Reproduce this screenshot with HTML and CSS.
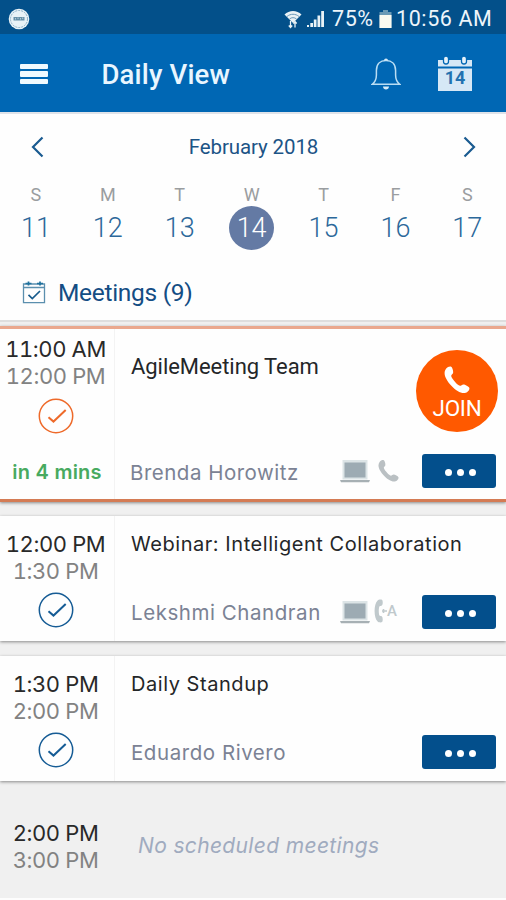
FILE: index.html
```html
<!DOCTYPE html>
<html lang="en">
<head>
<meta charset="utf-8">
<title>Daily View</title>
<link rel="stylesheet" href="styles.css">
</head>
<body>
<svg class="defs" width="0" height="0">
  <symbol id="phone" viewBox="0 0 26 28">
    <path d="M2.200 2.600C3.500.9 5.700 0 7.200.7c1.200.8 2.200 4.200 1.900 6.100-.3 1.400-1.700 1.700-1.900 2.900-.2 2 5 8.300 8 9.900 1.600.7 2.600-1.200 4.200-1.200 1.700 0 5.300 2 5.900 3.300.7 1.900-1.800 4.900-4.400 5.200C13.400 28.200.2 14.200.6 6.800c.1-1.600.7-3.100 1.600-4.200z" fill="currentColor"/>
  </symbol>
  <symbol id="laptop" viewBox="0 0 30 24">
    <path d="M2.500 1h25v19.500h-25z" fill="#dce4e6"/>
    <path d="M4.500 3.500h21v15h-21z" fill="#9dabb3"/>
    <path d="M0 21h30l-1 2.200H1z" fill="#a7b0b4"/>
  </symbol>
  <symbol id="check" viewBox="0 0 36 36">
    <circle cx="18" cy="18" r="16.700" fill="none" stroke="currentColor" stroke-width="1.500"/>
    <path d="M10.500 19.200l5 4.400 12.200-11.500" fill="none" stroke="currentColor" stroke-width="2"/>
  </symbol>
</svg>

<div class="status">
  <svg class="badge" width="22" height="22" viewBox="0 0 22 22">
    <circle cx="11" cy="11" r="10.300" fill="#e8f2f7"/>
    <circle cx="11" cy="11" r="8.500" fill="none" stroke="#7fa6be" stroke-width=".9" stroke-dasharray="2 1"/>
    <path d="M5.500 9h11v3.500h-11z" fill="#6690a8"/>
    <path d="M7.500 10v1.500M10 9.500v1.500M12.500 10v1.500M14.700 9.500v1.500" stroke="#c8dce6" stroke-width=".8"/>
  </svg>
  <svg class="wifi" width="18" height="19" viewBox="0 0 18 19">
    <path d="M.5 4.500C5-.2 13-.2 17.500 4.500L9 13z" fill="#e9f2f6"/>
    <path d="M3 6.500c3.500-3 8.500-3 12 0M5.500 9c2-1.800 5-1.800 7 0" fill="none" stroke="#5e8fb2" stroke-width=".9"/>
    <path d="M6.500 11v6M4.800 15.500l1.700 2 1.700-2M11 17.500v-6M9.300 13.500l1.700-2 1.700 2" fill="none" stroke="#e9f2f6" stroke-width="1.300"/>
  </svg>
  <svg class="signal" width="18" height="18" viewBox="0 0 18 18">
    <path d="M0 15h2v2H0zM3.300 13h2.700v4H3.300zM6.800 9.500h2.700V17H6.800zM10.500 5.500h2.700V17h-2.700zM14.200 1H17v16h-2.800z" fill="#e9f2f6"/>
  </svg>
  <span class="pct">75%</span>
  <svg class="battery" width="13" height="18" viewBox="0 0 13 18">
    <path d="M4 0h5v2h3.500v16H.5V2H4z" fill="#6b9ab5"/>
    <path d="M.5 5h12v13H.5z" fill="#fbfaf0"/>
  </svg>
  <span class="clock">10:56 AM</span>
</div>

<header class="bar">
  <div class="menu"><i></i><i></i><i></i></div>
  <h1>Daily View</h1>
  <svg class="bell" width="30" height="34" viewBox="0 0 30 34">
    <path d="M1.200 27.300c3.300-2.500 4.200-5 4.200-9.300v-4.500C5.400 7 9.300 3.500 15 3.500S24.600 7 24.600 13.500V18c0 4.300.9 6.800 4.200 9.300z" fill="none" stroke="#b9ddf3" stroke-width="1.500"/>
    <path d="M13 3.500a2 2 0 0 1 4 0zM12 29.500h6c0 4-6 4-6 0z" fill="#d5ebf8"/>
  </svg>
  <div class="cal">
    <svg width="36" height="36" viewBox="0 0 36 36">
      <path d="M1 4h34v6.500H1zM1 12.500h34V35H1z" fill="#d6e8f6"/>
      <rect x="6.500" y="0" width="5" height="8" rx="2.500" fill="#e5f2fb" stroke="#0067b4" stroke-width="1.300"/>
      <rect x="24.500" y="0" width="5" height="8" rx="2.500" fill="#e5f2fb" stroke="#0067b4" stroke-width="1.300"/>
    </svg>
    <span>14</span>
  </div>
</header>

<section class="picker">
  <div class="month">
    <svg width="13" height="22" viewBox="0 0 13 22"><path d="M11.500 1.500L2 11l9.500 9.500" fill="none" stroke="#1a5b91" stroke-width="2.200"/></svg>
    <span>February 2018</span>
    <svg width="13" height="22" viewBox="0 0 13 22"><path d="M1.500 1.500L11 11l-9.500 9.500" fill="none" stroke="#1a5b91" stroke-width="2.200"/></svg>
  </div>
  <div class="week">
    <div class="day"><span>S</span><b>11</b></div>
    <div class="day"><span>M</span><b>12</b></div>
    <div class="day"><span>T</span><b>13</b></div>
    <div class="day on"><span>W</span><b>14</b></div>
    <div class="day"><span>T</span><b>15</b></div>
    <div class="day"><span>F</span><b>16</b></div>
    <div class="day"><span>S</span><b>17</b></div>
  </div>
  <div class="tab">
    <svg width="24" height="23" viewBox="0 0 24 23">
      <path d="M1.500 3h21v18.700h-21zM1.500 6.500h21" fill="none" stroke="#5b8fae" stroke-width="1.300"/>
      <path d="M3.500 2.500h6M15 2.500h6M6.500.5v4M18 .5v4" stroke="#20729e" stroke-width="1.700"/>
      <path d="M6.500 13.800l3.800 3.700 7.700-7.500" fill="none" stroke="#175b8c" stroke-width="1.700"/>
    </svg>
    <span>Meetings (9)</span>
  </div>
</section>

<main>
  <article class="card now">
    <div class="time">
      <span class="start">11:00 AM</span><span class="end">12:00 PM</span>
      <svg class="check"><use href="#check"/></svg>
      <span class="soon">in 4 mins</span>
    </div>
    <div class="body">
      <h2 class="t1">AgileMeeting Team</h2>
      <div class="foot">
        <span class="who w1">Brenda Horowitz</span>
        <svg class="laptop"><use href="#laptop"/></svg>
        <svg class="phone"><use href="#phone"/></svg>
        <div class="more"><i></i><i></i><i></i></div>
      </div>
      <div class="join"><svg width="26" height="28"><use href="#phone"/></svg><span>JOIN</span></div>
    </div>
  </article>

  <article class="card second">
    <div class="time">
      <span class="start">12:00 PM</span><span class="end">1:30 PM</span>
      <svg class="check"><use href="#check"/></svg>
    </div>
    <div class="body">
      <h2 class="t2">Webinar: Intelligent Collaboration</h2>
      <div class="foot">
        <span class="who">Lekshmi Chandran</span>
        <svg class="laptop"><use href="#laptop"/></svg>
        <div class="auto">
          <svg width="10" height="26" viewBox="0 0 11 26"><path d="M4 1.500C5 .3 8 .2 9 1c1 1.200.7 5-.3 6-.9.700-2.200.2-2.700 1-1 2-1 8 0 10 .5.800 1.800.3 2.700 1 1 1 1.300 4.800.3 6-1 .8-4 .7-5-.5C-.5 20.500-.5 5.500 4 1.500z" fill="#c0c9cc"/></svg>
          <svg class="dash" width="5" height="10" viewBox="0 0 5 10"><path d="M0 5h5M1.500 3v4" stroke="#c0c9cc" stroke-width="1.600"/></svg>
          <span>A</span>
        </div>
        <div class="more"><i></i><i></i><i></i></div>
      </div>
    </div>
  </article>

  <article class="card third">
    <div class="time">
      <span class="start">1:30 PM</span><span class="end">2:00 PM</span>
      <svg class="check"><use href="#check"/></svg>
    </div>
    <div class="body">
      <h2 class="t3">Daily Standup</h2>
      <div class="foot">
        <span class="who">Eduardo Rivero</span>
        <div class="more"><i></i><i></i><i></i></div>
      </div>
    </div>
  </article>

  <div class="free">
    <div class="time"><span class="start">2:00 PM</span><span class="end">3:00 PM</span></div>
    <p>No scheduled meetings</p>
  </div>
</main>
</body>
</html>
```
FILE: styles.css
```css
* { box-sizing: border-box; }
body { margin: 0; width: 506px; height: 900px; overflow: hidden; background: #fdfdfd; font-family: Roboto, "Liberation Sans", sans-serif; white-space: nowrap; }
h1, h2, p { margin: 0; font-weight: 400; }
svg { flex: none; display: block; }
.defs { position: absolute; }

.status { height: 34px; background: #03508a; display: flex; align-items: center; padding: 4px 0 0 8px; color: #edf5fa; font-size: 21.500px; line-height: 26px; }
.wifi { margin-left: 254px; }
.signal { margin-left: 5px; }
.pct { margin-left: 7px; width: 47px; letter-spacing: .6px; }
.battery { margin-right: 4px; }
.clock { letter-spacing: .6px; }

.bar { height: 78px; background: #0067b4; display: flex; align-items: center; padding: 2px 33px 0 20px; }
.menu { width: 28px; display: grid; gap: 2px; }
.menu i { height: 5.500px; border-radius: 1px; background: #f0faff; }
.bar h1 { margin-left: 53.500px; padding-top: 1px; flex: 1; color: #e9f6ff; font-size: 27.500px; letter-spacing: .15px; font-weight: 500; line-height: 34px; }
.bell { margin-right: 36px; }
.cal { position: relative; }
.cal span { position: absolute; inset: 12px 0 0; text-align: center; font-weight: 700; font-size: 18px; line-height: 19px; color: #2272b0; }

.picker { height: 208px; border-top: 2px solid #dfe3e9; background: #fefefe; }
.month { display: flex; align-items: center; justify-content: space-between; height: 65px; padding: 0 30px 0 31px; color: #1c5486; font-size: 20.500px; letter-spacing: -.1px; }
.week { display: grid; grid-template-columns: repeat(7, 71.900px); height: 73px; padding-top: 5px; }
.day { display: grid; justify-items: center; grid-template-rows: 22px 44px; align-items: center; }
.day span { color: #9a9da0; font-size: 18px; line-height: 22px; }
.day b { width: 45px; height: 44px; line-height: 44px; border-radius: 50%; text-align: center; color: #2c689a; font-size: 27px; font-weight: 300; }
.day.on b { color: #fff; background: #647aa4; }
.tab { display: flex; align-items: center; height: 82px; padding: 0 0 0 22px; color: #144d84; font-size: 24.500px; letter-spacing: -.3px; }
.tab svg { margin-top: -2px; }
.tab span { margin: -1px 0 0 12px; }

main { height: 578px; background: #f0f0f0; border-top: 2px solid #dedede; }
.card, .free { display: grid; grid-template-columns: 114px 1fr; }
.card { background: #fefefe; box-shadow: 0 1px 3px #888; }
.now { margin-top: 3.500px; height: 176px; border-top: 3px solid #eaa88e; border-bottom: 3px solid #d47b54; }
.second { margin-top: 14.500px; height: 125px; }
.third { margin-top: 15px; height: 125px; }
.time { display: flex; flex-direction: column; align-items: center; padding-right: 3px; font-family: Inter, sans-serif; font-size: 22px; line-height: 27px; letter-spacing: -.4px; font-variant-numeric: tabular-nums; }
.now .time { padding-top: 7px; }
.second .time, .third .time { padding-top: 15px; }
.start { color: #292929; }
.end { color: #828282; }
.check { width: 36px; height: 36px; margin: 6.500px 0 0 1px; color: #165c95; }
.now .check { margin-top: 8px; color: #ee6a2a; }
.soon { margin: 25px 0 0 3px; font-size: 20px; line-height: 26px; font-weight: 600; letter-spacing: .2px; color: #48aa60; }
.body { position: relative; display: flex; flex-direction: column; justify-content: space-between; border-left: 1px solid #f3f3f3; padding: 0 10px 12px 16px; }
h2 { font-size: 22px; line-height: 28px; color: #242628; }
.t1 { margin-top: 24px; letter-spacing: -.05px; }
.t2, .t3 { margin-top: 14px; font-family: Inter, sans-serif; font-size: 20px; letter-spacing: .55px; }
.foot { display: flex; align-items: center; height: 34px; }
.now .foot { margin-bottom: -1px; }
.who { width: 209px; padding-top: 1px; font-family: Inter, sans-serif; font-size: 20.500px; line-height: 28px; color: #7b8294; letter-spacing: .55px; }
.w1 { padding-top: 4px; margin-left: -1px; width: 210px; letter-spacing: .5px; }
.laptop { width: 30px; height: 24px; }
.phone { width: 21px; height: 24px; margin-left: 8px; color: #bac0c3; }
.auto { margin: -2px 0 0 4px; display: flex; align-items: center; color: #c0c9cc; font-size: 15px; font-weight: 500; }
.dash { margin-left: -2px; }
.more { margin-left: auto; width: 74px; height: 34px; border-radius: 3px; background: #034f8c; display: flex; justify-content: center; align-items: center; gap: 5px; padding: 3px 0 0 3px; }
.more i { width: 7px; height: 7px; border-radius: 50%; background: #fff; }
.join { position: absolute; right: 8px; top: 21px; width: 82px; height: 82px; border-radius: 50%; background: #ff5900; color: #fff; display: flex; flex-direction: column; align-items: center; padding-top: 16px; }
.join span { font-size: 22.500px; line-height: 28px; letter-spacing: -.3px; }
.free { height: 117px; }
.free .time { padding-top: 38.500px; }
.free p { padding: 51px 0 0 24px; font-family: Inter, sans-serif; font-style: italic; font-size: 21px; letter-spacing: .35px; line-height: 28px; color: #a0abbf; }
```
